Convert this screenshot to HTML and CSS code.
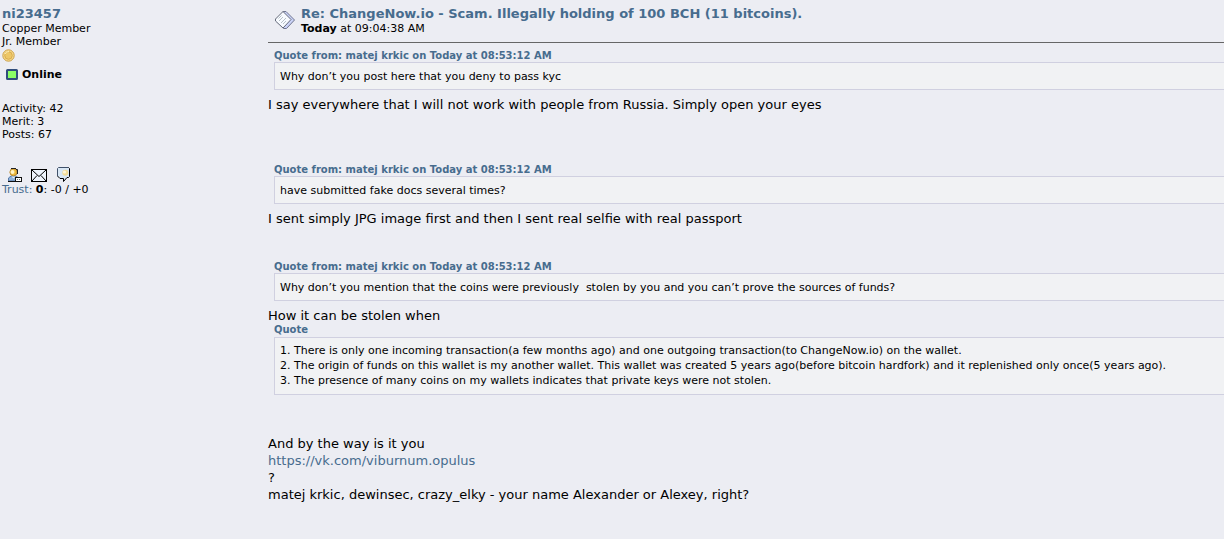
FILE: index.html
```html
<!DOCTYPE html>
<html lang="en">
<head>
<meta charset="utf-8">
<title>Re: ChangeNow.io - Scam. Illegally holding of 100 BCH (11 bitcoins).</title>
<link rel="stylesheet" href="styles.css">
</head>
<body>
<article class="post">
  <aside class="poster">
    <a class="poster-name" href="#profile">ni23457</a>
    <div>Copper Member</div>
    <div>Jr. Member</div>
    <svg class="coin" width="13" height="13" viewBox="0 0 13 13" role="img" aria-label="Coin">
      <circle cx="6.5" cy="6.5" r="5.7" fill="#f6dc8c" stroke="#cda04a"/>
      <circle cx="6.5" cy="6.5" r="3.8" fill="#edc767" stroke="#d9aa4e"/>
      <path d="M3 5Q4 2.5 7 2.5" fill="none" stroke="#fff0b8"/>
    </svg>
    <div class="status">
      <svg width="12" height="11" viewBox="0 0 12 11" aria-hidden="true">
        <rect x="1" y="1" width="10" height="9" rx=".5" fill="#8cff66" stroke="#314e7c" stroke-width="2"/>
      </svg>
      <b>Online</b>
    </div>
    <div class="stats">
      <div>Activity: 42</div>
      <div>Merit: 3</div>
      <div>Posts: 67</div>
    </div>
    <div class="actions">
      <a href="#profile" aria-label="View profile">
        <svg width="15" height="16" viewBox="0 0 15 16">
          <path d="M1.5 14V11L4 9H9L11.5 11V14Z" fill="#8fb2dc" stroke="#587aa6"/>
          <path d="M1 14.5H9" stroke="#111"/>
          <path d="M4.5 9.5H8.5L6.5 11.5Z" fill="#e2eefb"/>
          <circle cx="6.5" cy="5.2" r="3.6" fill="#edb93c" stroke="#b98a35"/>
          <circle cx="5.5" cy="5" r="2" fill="#fff3c4"/>
          <path d="M4 1.5H9M9 2.5H10.5V7" fill="none" stroke="#222"/>
          <path d="M8.5 10.5H14.5V14.5H8.5Z" fill="#fff" stroke="#111" shape-rendering="crispEdges"/>
          <path d="M10 12.5H11M12 12.5H13" stroke="#777"/>
        </svg>
      </a>
      <a href="#email" aria-label="Email">
        <svg width="16" height="16" viewBox="0 0 16 16">
          <rect x=".5" y="2.5" width="15" height="12" fill="#eef4fc" stroke="#000"/>
          <path d="M1 3L8 9.5L15 3M1 14L6 8.5M15 14L10 8.5" fill="none" stroke="#000"/>
        </svg>
      </a>
      <a href="#message" aria-label="Personal message">
        <svg width="15" height="16" viewBox="0 0 15 16">
          <path d="M2.5 .5H13.5V10.5H10.5L7.5 14.5V11.5H4.5L1.5 9.5V1.5Z" fill="#d9e7f5"/>
          <path d="M1.5 9V1.5L2.5 .5H12.5" fill="none" stroke="#40516a"/>
          <path d="M12.5 .5L13.5 1.5V9.5L12.5 10.5H11L7.5 14.5V11.5H4L1.5 9" fill="none" stroke="#000"/>
          <circle cx="9.3" cy="5.8" r="3" fill="#f3dd98"/>
          <circle cx="8.5" cy="5" r="1.6" fill="#fff6d9"/>
        </svg>
      </a>
    </div>
    <div><a href="#trust">Trust:</a> <b>0</b>: -0 / +0</div>
  </aside>
  <main class="content">
    <header class="post-header">
      <svg class="topic-icon" width="22" height="20" viewBox="0 0 22 20" aria-hidden="true">
        <path d="M9 1.5H12L20.5 10L12.5 18.5H9.5Z" fill="#cbd3f8" stroke="#70768f"/>
        <path d="M1.5 9L9 1.5L17 9.5L9 18L1.5 11Z" fill="#f8fbff" stroke="#636979"/>
        <path d="M4.5 8.5L7.5 5.5M5 11L9 7M7 13L12 8M9 14L12 11" stroke="#b7c1c8"/>
      </svg>
      <div>
        <h1><a href="#post">Re: ChangeNow.io - Scam. Illegally holding of 100 BCH (11 bitcoins).</a></h1>
        <div class="date"><b>Today</b> at 09:04:38 AM</div>
      </div>
    </header>
    <section class="body">
      <a class="quote-header" href="#quoted">Quote from: matej krkic on Today at 08:53:12 AM</a>
      <blockquote class="quote">Why don’t you post here that you deny to pass kyc</blockquote>
      <p class="gap-large">I say everywhere that I will not work with people from Russia. Simply open your eyes</p>
      <a class="quote-header" href="#quoted">Quote from: matej krkic on Today at 08:53:12 AM</a>
      <blockquote class="quote">have submitted fake docs several times?</blockquote>
      <p class="gap">I sent simply JPG image first and then I sent real selfie with real passport</p>
      <a class="quote-header" href="#quoted">Quote from: matej krkic on Today at 08:53:12 AM</a>
      <blockquote class="quote">Why don’t you mention that the coins were previously&nbsp; stolen by you and you can’t prove the sources of funds?</blockquote>
      <p>How it can be stolen when</p>
      <div class="quote-header">Quote</div>
      <blockquote class="quote quote-list">
        <div>1. There is only one incoming transaction(a few months ago) and one outgoing transaction(to ChangeNow.io) on the wallet.</div>
        <div>2. The origin of funds on this wallet is my another wallet. This wallet was created 5 years ago(before bitcoin hardfork) and it replenished only once(5 years ago).</div>
        <div>3. The presence of many coins on my wallets indicates that private keys were not stolen.</div>
      </blockquote>
      <p>And by the way is it you</p>
      <p><a href="https://vk.com/viburnum.opulus">https://vk.com/viburnum.opulus</a></p>
      <p>?</p>
      <p>matej krkic, dewinsec, crazy_elky - your name Alexander or Alexey, right?</p>
    </section>
  </main>
</article>
</body>
</html>
```
FILE: styles.css
```css
body {
  margin: 0;
  background: #ecedf3;
  color: #000;
  font: 11px/13px Verdana, "DejaVu Sans", sans-serif;
}

a {
  color: #476c8e;
  text-decoration: none;
}

svg {
  display: block;
}

.post {
  display: grid;
  grid-template-columns: 266px minmax(0, 1fr);
  padding: 6px 0 32px 2px;
}

.poster-name {
  display: block;
  font-size: 13px;
  line-height: 16px;
  font-weight: bold;
}

.coin {
  margin-top: 1px;
}

.status {
  display: flex;
  align-items: center;
  gap: 4px;
  margin: 6px 0 21px 4px;
}

.stats {
  margin-bottom: 26px;
}

.actions {
  display: flex;
  gap: 9px;
  margin-left: 5px;
}

.post-header {
  display: flex;
  gap: 5px;
  padding: 0 0 7px 6px;
  border-bottom: 1px solid #666;
}

.topic-icon {
  margin-top: 4px;
}

h1 {
  margin: 0;
  font-size: 13px;
  line-height: 16px;
}

.body {
  padding-top: 7px;
  font-size: 13px;
  line-height: 17px;
}

.body p {
  margin: 0;
}

.quote-header {
  display: block;
  margin-left: 6px;
  color: #476c8e;
  font-size: 10px;
  line-height: 12px;
  font-weight: bold;
}

.quote {
  margin: 0 0 6px 6px;
  padding: 6px 5px 5px;
  border: 1px solid #d0d0e0;
  border-right: 0;
  background: #f1f2f4;
  font-size: 11px;
  line-height: 15px;
}

.quote-list {
  margin: 1px 0 40px 6px;
  padding: 5px 5px 6px;
}

.body .gap-large {
  margin-bottom: 51px;
}

.body .gap {
  margin-bottom: 34px;
}
```
